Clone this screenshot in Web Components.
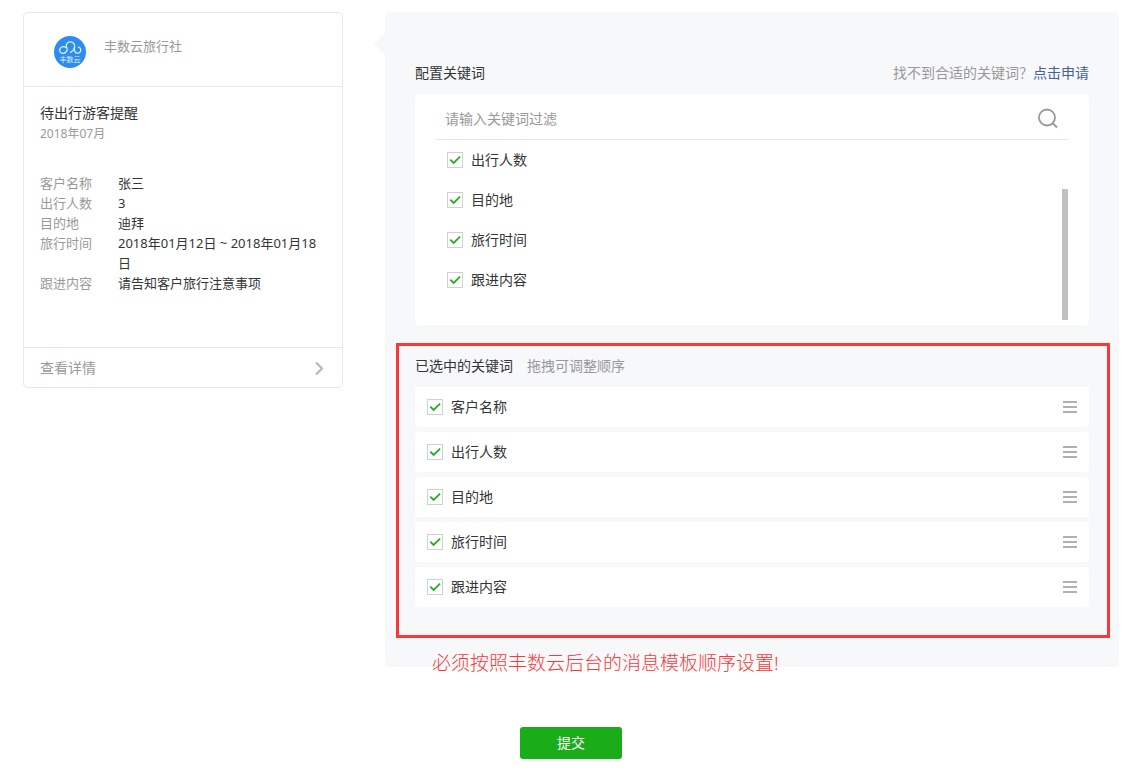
<!DOCTYPE html>
<html lang="zh-CN">
<head>
<meta charset="utf-8">
<title>模板消息设置</title>
<style>
  body {
    margin: 0;
    background: #fff;
    color: #353535;
    font: 14px/20px "Noto Sans", "Noto Sans CJK SC", sans-serif;
  }
</style>
</head>
<body>
<template-editor></template-editor>

<template id="template-editor">
  <style>
    :host { display: block; padding: 12px 28px 14px 23px; }
    form { display: flex; flex-direction: column; align-items: center; gap: 60px; margin: 0; }
    .columns { display: flex; align-items: flex-start; gap: 42px; align-self: stretch; }
    message-card { flex: 0 0 320px; }
    keyword-panel { flex: 1; min-width: 0; }
    button {
      width: 102px; height: 32px; padding: 0; border: 0; border-radius: 3px;
      background: #1aad19; color: #fff; font: inherit; cursor: pointer;
    }
  </style>
  <form>
    <div class="columns">
      <message-card>
        <span slot="name">丰数云旅行社</span>
        <span slot="title">待出行游客提醒</span>
        <span slot="date">2018年07月</span>
        <message-field label="客户名称">张三</message-field>
        <message-field label="出行人数">3</message-field>
        <message-field label="目的地">迪拜</message-field>
        <message-field label="旅行时间">2018年01月12日 ~ 2018年01月18日</message-field>
        <message-field label="跟进内容">请告知客户旅行注意事项</message-field>
      </message-card>
      <keyword-panel></keyword-panel>
    </div>
    <button type="button">提交</button>
  </form>
</template>

<template id="message-card">
  <style>
    :host { display: block; box-sizing: border-box; border: 1px solid #e7e7eb; border-radius: 5px; }
    header { display: flex; gap: 18px; padding: 23px 30px 18px; border-bottom: 1px solid #e7e7eb; color: #999; font-size: 13px; }
    svg { display: block; flex: none; }
    .body { padding: 16px 16px 54px; }
    h2 { margin: 0; font-size: 14px; font-weight: 400; }
    .date { color: #999; font-size: 12px; line-height: 22px; }
    .fields { margin-top: 28px; font-size: 13px; }
    .more {
      display: flex; justify-content: space-between; align-items: center; height: 39px;
      padding: 0 16px; border-top: 1px solid #e7e7eb; color: #999; text-decoration: none;
    }
  </style>
  <header>
    <svg width="32" height="32" viewBox="0 0 32 32">
      <circle cx="16" cy="16" r="16" fill="#2d8cf0"/>
      <path d="M11.500 11.200C8.500 9.800 5.600 11.600 5.600 14.200C5.600 17 8.800 18.200 11.200 16.600C13.500 15 13.500 12.500 12.300 10.500C11.800 7.800 14 5.800 16.400 5.900C19.200 6 20.900 8.200 20.600 10.800C20.300 13.500 18.800 15.200 16.500 16.500M20.500 11.500C19.900 14.200 20.800 17 23.300 17.200C25.600 17.300 27 15.500 26.700 13.400C26.500 12.200 25.600 11.400 24.400 11.200" fill="none" stroke="#e0efff" stroke-width="1.300" stroke-linecap="round"/>
      <text x="16" y="26" text-anchor="middle" fill="#e0efff" font-size="7">丰数云</text>
    </svg>
    <slot name="name"></slot>
  </header>
  <div class="body">
    <h2><slot name="title"></slot></h2>
    <div class="date"><slot name="date"></slot></div>
    <div class="fields"><slot></slot></div>
  </div>
  <a class="more" href="#">
    <span>查看详情</span>
    <svg width="12" height="14" viewBox="0 0 12 14"><path d="M2 1.500l6 6-6 6" fill="none" stroke="#b8b8b8" stroke-width="2.200"/></svg>
  </a>
</template>

<template id="message-field">
  <style>
    :host { display: flex; }
    .label { flex: 0 0 78px; color: #999; }
    .value { flex: 1; min-width: 0; }
  </style>
  <span class="label"></span><span class="value"><slot></slot></span>
</template>

<template id="keyword-panel">
  <style>
    :host {
      display: block; position: relative; padding: 51px 30px 0;
      background: #f6f8fa; border-radius: 5px;
    }
    :host::before {
      content: ""; position: absolute; top: 21px; left: -11px;
      border: solid transparent; border-width: 11px 11px 11px 0; border-right-color: #f6f8fa;
    }
    h3 { margin: 0; font-size: 14px; font-weight: 400; }
    .head { display: flex; justify-content: space-between; margin-bottom: 11px; }
    .hint { color: #999; }
    a { color: #44619d; text-decoration: none; }
    .picker { padding: 0 20px 5px; background: #fff; border-radius: 5px; }
    .search { display: flex; align-items: center; box-sizing: border-box; height: 46px; padding: 4px 10px 0; border-bottom: 1px solid #e7e7eb; }
    .search input {
      flex: 1; min-width: 0; height: 30px; padding: 0; border: 0; outline: 0;
      background: none; color: inherit; font: inherit;
    }
    .search input::placeholder { color: #999; opacity: 1; }
    .search button { display: block; padding: 0; border: 0; background: none; cursor: pointer; }
    .search svg { display: block; }
    .options { display: flex; height: 180px; overflow: hidden; }
    .list { flex: 1; }
    .thumb { align-self: flex-end; width: 6px; height: 131px; margin-right: 1px; background: #c1c1c1; }
    .selected { margin: 18px -21px 0 -19px; padding: 10px 18px 28px 16px; border: 3px solid #fb3838; }
    .selected .head { justify-content: flex-start; gap: 14px; }
    .rows { display: grid; gap: 5px; }
    .rows keyword-item { background: #fff; border-radius: 3px; }
    .note { margin: 13px 0 -8px 17px; color: #fb3838; font-size: 19px; font-weight: 300; line-height: 24px; }
  </style>
  <div class="head">
    <h3>配置关键词</h3>
    <span class="hint">找不到合适的关键词？<a href="#">点击申请</a></span>
  </div>
  <div class="picker">
    <div class="search">
      <input type="text" placeholder="请输入关键词过滤" aria-label="关键词过滤">
      <button type="button" aria-label="搜索">
        <svg width="22" height="22" viewBox="0 0 22 22"><g fill="none" stroke="#999" stroke-width="1.800"><circle cx="10" cy="9.500" r="8"/><path d="M15.500 15l4.500 4.500"/></g></svg>
      </button>
    </div>
    <div class="options">
      <div class="list">
        <keyword-item>出行人数</keyword-item>
        <keyword-item>目的地</keyword-item>
        <keyword-item>旅行时间</keyword-item>
        <keyword-item>跟进内容</keyword-item>
      </div>
      <div class="thumb"></div>
    </div>
  </div>
  <section class="selected">
    <div class="head">
      <h3>已选中的关键词</h3>
      <span class="hint">拖拽可调整顺序</span>
    </div>
    <div class="rows">
      <keyword-item sortable>客户名称</keyword-item>
      <keyword-item sortable>出行人数</keyword-item>
      <keyword-item sortable>目的地</keyword-item>
      <keyword-item sortable>旅行时间</keyword-item>
      <keyword-item sortable>跟进内容</keyword-item>
    </div>
  </section>
  <p class="note">必须按照丰数云后台的消息模板顺序设置!</p>
</template>

<template id="keyword-item">
  <style>
    :host { display: flex; align-items: center; justify-content: space-between; height: 40px; padding: 0 12px; }
    label { display: flex; align-items: center; gap: 8px; }
    input {
      appearance: none; width: 16px; height: 16px; margin: 0;
      border: 1px solid #d0d0d0; background: #fff;
    }
    input:checked {
      background: #fff url("data:image/svg+xml,%3Csvg xmlns='http://www.w3.org/2000/svg' viewBox='0 0 14 14'%3E%3Cpath d='M2.300 6.600l3.300 3.300 6.500-6.300' fill='none' stroke='%2322ae21' stroke-width='1.800'/%3E%3C/svg%3E") center / 14px 14px no-repeat;
    }
    svg { display: none; }
    :host([sortable]) svg { display: block; }
  </style>
  <label><input type="checkbox" checked><span><slot></slot></span></label>
  <svg width="14" height="12" viewBox="0 0 14 12"><path d="M0 1h14M0 6h14M0 11h14" stroke="#b0b0b0" stroke-width="2"/></svg>
</template>

<script>
  class TemplateElement extends HTMLElement {
    constructor() {
      super();
      const template = document.getElementById(this.localName);
      this.attachShadow({ mode: "open" }).append(template.content.cloneNode(true));
    }
  }
  class MessageField extends TemplateElement {
    connectedCallback() {
      this.shadowRoot.querySelector(".label").textContent = this.getAttribute("label");
    }
  }
  customElements.define("message-field", MessageField);
  customElements.define("message-card", class extends TemplateElement {});
  customElements.define("keyword-item", class extends TemplateElement {});
  customElements.define("keyword-panel", class extends TemplateElement {});
  customElements.define("template-editor", class extends TemplateElement {});
</script>
</body>
</html>
